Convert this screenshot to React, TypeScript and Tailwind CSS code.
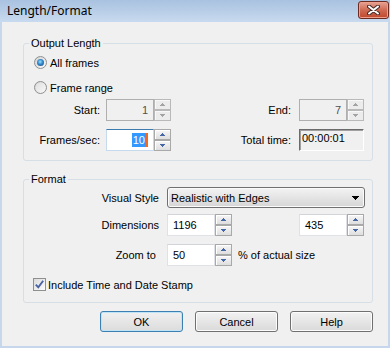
import React from "react";

function Arrow({ up, color }: { up: boolean; color: string }) {
  return (
    <svg width="5" height="3" viewBox="0 0 5 3" shapeRendering="crispEdges">
      <path
        d={up ? "M2 0h1v1h1v1h1v1H0V2h1V1h1z" : "M0 0h5v1H4v1H3v1H2V2H1V1H0z"}
        fill={color}
      />
    </svg>
  );
}

function Spin({ enabled }: { enabled: boolean }) {
  const c = enabled ? "#4766a8" : "#a3a3a3";
  const btn = enabled
    ? "flex-1 flex items-center justify-center border border-[#a9a9a9] shadow-[inset_1px_1px_0_#fff] bg-gradient-to-b from-[#f7f7f7] to-[#dedede]"
    : "flex-1 flex items-center justify-center border border-[#b9b9b9] shadow-[inset_1px_1px_0_#f8f8f8] bg-[#ececec]";
  return (
    <div className="flex flex-col w-[17px] h-full">
      <div className={btn}>
        <Arrow up color={c} />
      </div>
      <div className={btn}>
        <Arrow up={false} color={c} />
      </div>
    </div>
  );
}

function DisabledNum({ v }: { v: string }) {
  return (
    <div className="flex h-full">
      <div className="w-[48px] h-full border border-[#afafaf] bg-[#f0f0f0] flex items-center justify-end pr-[5px] text-[#505050]">
        {v}
      </div>
      <Spin enabled={false} />
    </div>
  );
}

function Num({ v }: { v: string }) {
  return (
    <div className="flex h-full">
      <div className="w-[48px] h-full border border-[#dfe1e6] border-t-[#d2d4da] bg-white flex items-center pl-[5px]">
        {v}
      </div>
      <Spin enabled />
    </div>
  );
}

function Radio({ checked }: { checked?: boolean }) {
  return (
    <div className="w-[13px] h-[13px] rounded-full border border-[#8e8f8f] bg-gradient-to-br from-[#d4d4d4] to-[#fbfbfb] flex items-center justify-center shrink-0">
      {checked ? (
        <div className="w-[7px] h-[7px] rounded-full bg-[radial-gradient(circle_at_45%_40%,#9be2ff_0%,#3a8fd0_40%,#0d3f74_100%)]" />
      ) : (
        <div className="w-[9px] h-[9px] rounded-full bg-gradient-to-br from-[#e0e0e0] to-[#f6f6f6]" />
      )}
    </div>
  );
}

function CheckBox() {
  return (
    <div className="w-[13px] h-[13px] border border-[#8e8f8f] bg-gradient-to-br from-[#dcdcdc] to-[#fbfbfb] flex items-center justify-center shrink-0">
      <svg width="11" height="11" viewBox="0 0 11 11">
        <path d="M1.8 5.6 L4.3 8.3 L9.2 1.8" fill="none" stroke="#4a62a3" strokeWidth="1.9" />
      </svg>
    </div>
  );
}

function Button({ label, def }: { label: string; def?: boolean }) {
  return (
    <div
      className={
        def
          ? "w-[83px] h-[21px] rounded-[3px] border border-[#3c7fb1] shadow-[inset_0_0_0_1px_#bfe3f7] bg-gradient-to-b from-[#f0f0f0] to-[#dcdcdc] flex items-center justify-center"
          : "w-[83px] h-[21px] rounded-[3px] border border-[#707070] shadow-[inset_0_0_0_1px_#fcfcfc] bg-gradient-to-b from-[#f2f2f2] to-[#dadada] flex items-center justify-center"
      }
    >
      {label}
    </div>
  );
}

export default function App() {
  return (
    <div className="w-[390px] h-[348px] bg-[#c6d7ec] flex flex-col font-['Liberation_Sans',Arial,sans-serif] text-[11px] text-black leading-[14px]">
      <div className="h-[22px] shrink-0 flex justify-between bg-gradient-to-b from-[#a9c2e0] to-[#c8daef] pl-[7px] pr-[1px]">
        <span className="text-[12px] leading-[22px] font-['Noto_Sans',sans-serif]">Length/Format</span>
        <div className="mt-[1px] w-[31px] h-[18px] rounded-[3px] border border-[#6b2a22] shadow-[inset_0_0_0_1px_#efa08c] bg-gradient-to-b from-[#e6a394] via-[#cf6a53] to-[#c0472d] flex items-center justify-center">
          <svg width="13" height="10" viewBox="0 0 13 10">
            <path d="M2 1.5 L11 8.5 M11 1.5 L2 8.5" stroke="#4a2a26" strokeWidth="4" strokeLinecap="round" />
            <path d="M2 1.5 L11 8.5 M11 1.5 L2 8.5" stroke="#ffffff" strokeWidth="2" strokeLinecap="round" />
          </svg>
        </div>
      </div>
      <div className="flex-1 mx-[2px] mb-[2px] bg-[#f0f0f0] flex flex-col">
        <fieldset className="ml-[21px] mt-[14px] w-[350px] border border-[#d5dfe5] rounded-[3px]">
          <legend className="ml-[5px] px-[2px] leading-[14px]">Output Length</legend>
          <div className="pt-[6px] pb-[9px]">
            <div className="flex items-center h-[13px] pl-[10px]">
              <Radio checked />
              <span className="ml-[3px]">All frames</span>
            </div>
            <div className="flex items-center h-[13px] pl-[10px] mt-[12px]">
              <Radio />
              <span className="ml-[3px]">Frame range</span>
            </div>
            <div className="flex items-center h-[22px] mt-[5px] pr-[8px]">
              <div className="w-[76px] text-right">Start:</div>
              <div className="ml-[6px] h-full">
                <DisabledNum v="1" />
              </div>
              <div className="flex-1 text-right">End:</div>
              <div className="ml-[8px] h-full">
                <DisabledNum v="7" />
              </div>
            </div>
            <div className="flex items-center h-[22px] mt-[8px] pr-[8px]">
              <div className="w-[76px] text-right">Frames/sec:</div>
              <div className="ml-[6px] h-full flex">
                <div className="w-[48px] h-full border border-[#c5daed] border-t-[#3d7bad] bg-white flex items-center justify-end pr-[5px]">
                  <span className="bg-[#3399ff] text-white px-[1px]">10</span>
                  <span className="w-[2px] h-[14px] bg-[#f26b1d]" />
                </div>
                <Spin enabled />
              </div>
              <div className="flex-1 text-right">Total time:</div>
              <div className="ml-[8px] h-full w-[65px] border border-t-[#6b6b6b] border-l-[#6b6b6b] border-r-white border-b-white shadow-[inset_1px_1px_0_#a0a0a0] bg-[#f0f0f0] pl-[2px] pt-[1px]">
                00:00:01
              </div>
            </div>
          </div>
        </fieldset>

        <fieldset className="ml-[21px] mt-[11px] w-[350px] border border-[#d5dfe5] rounded-[3px]">
          <legend className="ml-[5px] px-[2px] leading-[14px]">Format</legend>
          <div className="pt-[1px] pb-[11px]">
            <div className="flex items-center h-[21px]">
              <div className="w-[135px] text-right">Visual Style</div>
              <div className="ml-[8px] w-[198px] h-full rounded-[3px] border border-[#707070] shadow-[inset_0_0_0_1px_#fbfbfb] bg-gradient-to-b from-[#f3f3f3] to-[#d6d6d6] flex items-center justify-between pl-[3px] pr-[5px]">
                <span>Realistic with Edges</span>
                <svg width="7" height="4" viewBox="0 0 7 4" shapeRendering="crispEdges">
                  <path d="M0 0h7v1H6v1H5v1H4v1H3V3H2V2H1V1H0z" fill="#000" />
                </svg>
              </div>
            </div>
            <div className="flex items-center h-[22px] mt-[6px] pr-[8px]">
              <div className="w-[135px] text-right">Dimensions</div>
              <div className="ml-[8px] h-full">
                <Num v="1196" />
              </div>
              <div className="flex-1" />
              <div className="h-full">
                <Num v="435" />
              </div>
            </div>
            <div className="flex items-center h-[22px] mt-[8px]">
              <div className="w-[132px] text-right">Zoom to</div>
              <div className="ml-[11px] h-full">
                <Num v="50" />
              </div>
              <span className="ml-[6px]">% of actual size</span>
            </div>
            <div className="flex items-center h-[13px] mt-[12px] pl-[9px]">
              <CheckBox />
              <span className="ml-[2px]">Include Time and Date Stamp</span>
            </div>
          </div>
        </fieldset>

        <div className="flex justify-end gap-[12px] pr-[15px] mt-[8px]">
          <Button label="OK" def />
          <Button label="Cancel" />
          <Button label="Help" />
        </div>
      </div>
    </div>
  );
}
